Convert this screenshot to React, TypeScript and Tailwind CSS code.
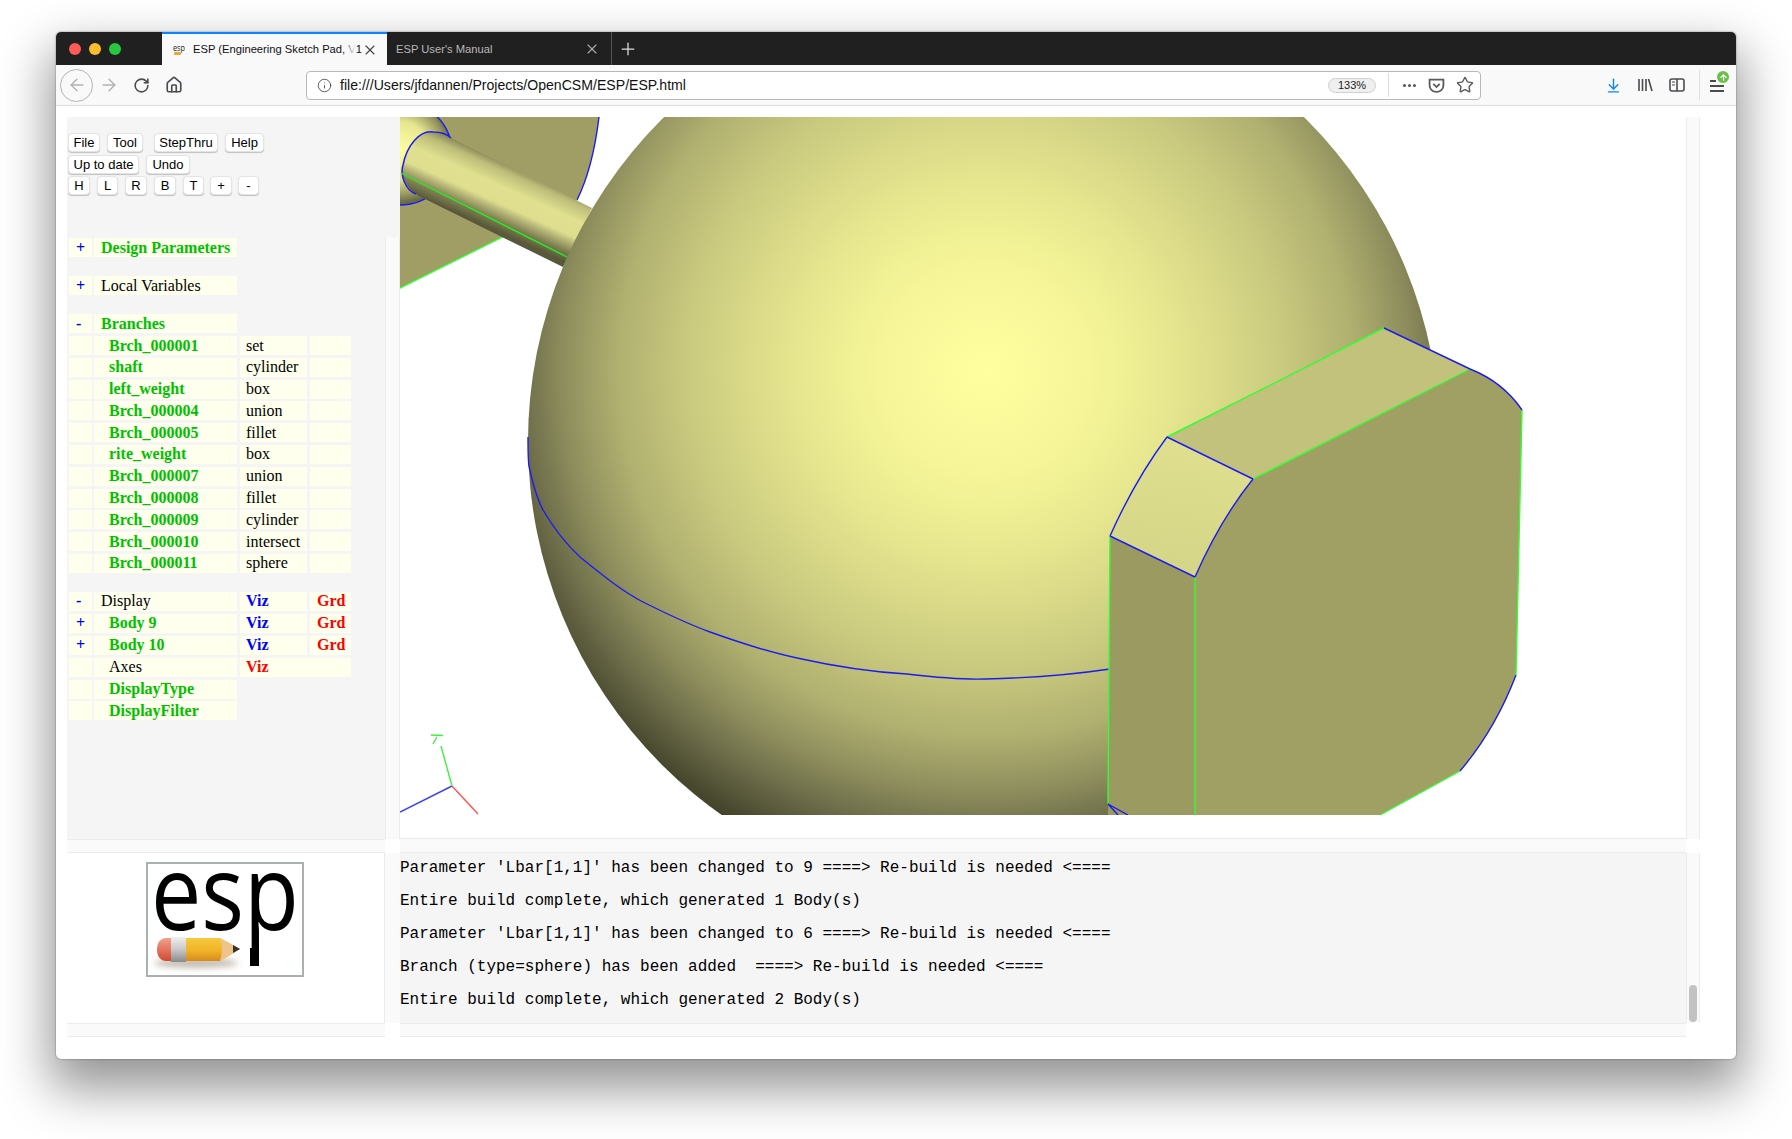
import React from 'react';
import { ArrowLeft, ArrowRight, RotateCw, Home, Info, Ellipsis, Star, ArrowDownToLine, X, Plus, ArrowUp } from 'lucide-react';

const branches: [string, string][] = [
  ['Brch_000001', 'set'],
  ['shaft', 'cylinder'],
  ['left_weight', 'box'],
  ['Brch_000004', 'union'],
  ['Brch_000005', 'fillet'],
  ['rite_weight', 'box'],
  ['Brch_000007', 'union'],
  ['Brch_000008', 'fillet'],
  ['Brch_000009', 'cylinder'],
  ['Brch_000010', 'intersect'],
  ['Brch_000011', 'sphere'],
];

const messages = [
  "Parameter 'Lbar[1,1]' has been changed to 9 ====> Re-build is needed <====",
  'Entire build complete, which generated 1 Body(s)',
  "Parameter 'Lbar[1,1]' has been changed to 6 ====> Re-build is needed <====",
  'Branch (type=sphere) has been added  ====> Re-build is needed <====',
  'Entire build complete, which generated 2 Body(s)',
];

const btn =
  'h-[19px] bg-white rounded-[4px] border border-[#e4e4e4] shadow-[0_1px_1px_rgba(0,0,0,0.22)] flex items-center justify-center text-[13px] leading-none text-black';
const cell = 'h-[19px] bg-[#ffffee] flex items-center whitespace-nowrap';
const green = 'font-bold text-[#00c000]';

const Toggle = ({ sign }: { sign?: string }) => (
  <div className={`${cell} w-[23px] pl-[7px] font-bold text-[#0000ff]`}>{sign}</div>
);

const Scene = () => (
  <svg viewBox="400 117 1286 698" className="block w-[1286px] h-[698px]">
    <defs>
      <radialGradient id="sphere" gradientUnits="userSpaceOnUse" cx="985" cy="370" r="525">
        <stop offset="0" stopColor="#ffffa0" />
        <stop offset="0.2" stopColor="#f6f698" />
        <stop offset="0.36" stopColor="#e6e68f" />
        <stop offset="0.56" stopColor="#cbcb80" />
        <stop offset="0.7" stopColor="#b0b070" />
        <stop offset="0.8" stopColor="#8f8f5e" />
        <stop offset="0.89" stopColor="#6a6a48" />
        <stop offset="0.97" stopColor="#47472e" />
        <stop offset="1" stopColor="#40402a" />
      </radialGradient>
      <radialGradient id="blob" gradientUnits="userSpaceOnUse" cx="400" cy="150" r="52">
        <stop offset="0" stopColor="#ffffa0" />
        <stop offset="0.55" stopColor="#e6e690" />
        <stop offset="0.85" stopColor="#9a9a60" />
        <stop offset="1" stopColor="#6c6c46" />
      </radialGradient>
      <linearGradient id="shaft" gradientUnits="userSpaceOnUse" x1="450" y1="138" x2="423" y2="198">
        <stop offset="0" stopColor="#8e8c5a" />
        <stop offset="0.12" stopColor="#bcbc78" />
        <stop offset="0.35" stopColor="#e0e090" />
        <stop offset="0.6" stopColor="#dede8e" />
        <stop offset="0.7" stopColor="#b5b578" />
        <stop offset="0.85" stopColor="#7d7d50" />
        <stop offset="1" stopColor="#58583a" />
      </linearGradient>
      <linearGradient id="fillet" gradientUnits="userSpaceOnUse" x1="1167" y1="437" x2="1150" y2="560">
        <stop offset="0" stopColor="#dfdf8f" />
        <stop offset="1" stopColor="#d6d688" />
      </linearGradient>
    </defs>

    {/* left weight behind the shaft */}
    <path d="M448 117 L599 117 C595 150 587 180 577 200 L400 288 L400 117 Z" fill="#a09e64" />
    <path d="M599 117 C595 150 587 180 577 200" fill="none" stroke="#1c1cf0" strokeWidth="1.4" />
    <path d="M577 200 L400 288" fill="none" stroke="#33ff33" strokeWidth="1.4" />
    <circle cx="400" cy="153" r="52" fill="url(#blob)" stroke="#1c1cf0" strokeWidth="1.4" />

    {/* shaft */}
    <path
      d="M451 138 L592 208 L563 267 L423 198 C405 190 400 175 403 165 C407 145 420 130 433 132 C440 132 447 134 451 138 Z"
      fill="url(#shaft)"
    />
    <path d="M451 138 C447 134 440 132 433 132 C420 130 407 145 403 165 C400 175 405 190 416 194" fill="none" stroke="#1c1cf0" strokeWidth="1.5" />
    <path d="M401 173 L567 257" stroke="#22ee22" strokeWidth="1.4" />

    {/* sphere */}
    <circle cx="984" cy="442" r="456" fill="url(#sphere)" />
    <path
      d="M528 437 C528 450 528 460 529 466 C532 480 536 497 543 510 C553 527 566 544 580 557 C600 573 620 590 643 602 C665 613 688 624 710 632 C738 642 768 652 797 658 C833 666 870 672 907 674 C933 677 959 680 985 679 C1027 678 1070 675 1110 669"
      fill="none"
      stroke="#1c1cf0"
      strokeWidth="1.4"
    />

    {/* right weight */}
    <path d="M1167 437 L1384 328 L1470 369 L1253 479 Z" fill="#c2c27c" />
    <path d="M1110 536 Q1135 480 1167 437 L1253 479 Q1220 520 1195 577 Z" fill="url(#fillet)" />
    <path d="M1110 536 L1195 577 L1195 815 L1108 815 Z" fill="#9b9a60" />
    <path d="M1195 577 Q1220 520 1253 479 L1470 369 Q1503 382 1522 410 L1516 675 Q1495 730 1460 771 L1380 815 L1195 815 Z" fill="#a1a064" />
    <g fill="none" stroke="#33ff33" strokeWidth="1.4">
      <path d="M1167 437 L1384 328" />
      <path d="M1253 479 L1470 369" />
      <path d="M1110 536 L1108 804" />
      <path d="M1195 577 L1195 815" />
      <path d="M1522 410 L1516 675" />
      <path d="M1460 771 L1380 815" />
    </g>
    <g fill="none" stroke="#1c1cf0" strokeWidth="1.4">
      <path d="M1384 328 L1470 369" />
      <path d="M1167 437 L1253 479" />
      <path d="M1110 536 L1195 577" />
      <path d="M1110 536 Q1135 480 1167 437" />
      <path d="M1195 577 Q1220 520 1253 479" />
      <path d="M1470 369 Q1503 382 1522 410" />
      <path d="M1516 675 Q1495 730 1460 771" />
      <path d="M1108 804 L1128 815 M1108 804 L1118 815" />
    </g>

    {/* axes */}
    <path d="M452 786 L400 812" stroke="#4040f0" strokeWidth="1.4" />
    <path d="M452 786 L478 814" stroke="#ff5050" strokeWidth="1.4" />
    <path d="M452 786 L441 746 M431 735 L443 735.5 M437 737 L433 744" stroke="#40f040" strokeWidth="1.4" fill="none" />
  </svg>
);

const Logo = () => (
  <svg viewBox="0 0 154 111" className="block w-[158px] h-[115px] border-2 border-[#a8b0b0] bg-white">
    <defs>
      <linearGradient id="pbody" x1="0" y1="0" x2="0" y2="1">
        <stop offset="0" stopColor="#f7c93e" />
        <stop offset="0.55" stopColor="#f0b428" />
        <stop offset="1" stopColor="#d68a1c" />
      </linearGradient>
      <linearGradient id="ferrule" x1="0" y1="0" x2="0" y2="1">
        <stop offset="0" stopColor="#f0f0f0" />
        <stop offset="0.5" stopColor="#c8c8c8" />
        <stop offset="1" stopColor="#8a8a8a" />
      </linearGradient>
      <linearGradient id="eraser" x1="0" y1="0" x2="0" y2="1">
        <stop offset="0" stopColor="#f3a08a" />
        <stop offset="1" stopColor="#d24a32" />
      </linearGradient>
      <filter id="soft" x="-20%" y="-100%" width="140%" height="300%">
        <feGaussianBlur stdDeviation="3" />
      </filter>
    </defs>
    <text
      x="3"
      y="66"
      textLength="148"
      lengthAdjust="spacingAndGlyphs"
      fontFamily="'Open Sans', sans-serif"
      fontSize="104"
      fill="#000"
    >
      esp
    </text>
    <rect x="102" y="84" width="9" height="18" fill="#000" />
    <ellipse cx="48" cy="99" rx="42" ry="5" fill="#7a6a50" opacity="0.45" filter="url(#soft)" />
    <path d="M18 74 H24 V97 H18 C13 97 9 93 9 85.5 C9 78 13 74 18 74 Z" fill="url(#eraser)" />
    <rect x="23" y="73" width="15" height="25" fill="url(#ferrule)" />
    <path d="M38 74 H72 L92 85 L72 97 H38 Z" fill="url(#pbody)" />
    <path d="M72 74 L92 85 L72 97 Q76 85 72 74 Z" fill="#efc48a" />
    <path d="M85 81 L92 85 L85 89 Z" fill="#333" />
  </svg>
);

const Favicon = () => (
  <svg viewBox="0 0 14 14" className="w-[14px] h-[14px] shrink-0">
    <text x="1" y="8" textLength="12" lengthAdjust="spacingAndGlyphs" fontFamily="'Open Sans', sans-serif" fontSize="9" fill="#222">
      esp
    </text>
    <rect x="2" y="9" width="7" height="3" rx="1" fill="#e8a92c" />
  </svg>
);

export default function App() {
  return (
    <div className="min-h-[1139px] bg-white pt-[32px] pl-[56px] font-['Liberation_Sans',Arial,sans-serif]">
      <div className="w-[1680px] h-[1027px] bg-white rounded-[5px] overflow-hidden shadow-[0_24px_50px_6px_rgba(0,0,0,0.42),0_0_2px_rgba(0,0,0,0.5)]">
        {/* tab strip */}
        <div className="h-[33px] bg-[#202020] flex">
          <div className="w-[106px] pl-[13px] flex items-center gap-[8px]">
            <span className="w-[12px] h-[12px] rounded-full bg-[#fc5b57]" />
            <span className="w-[12px] h-[12px] rounded-full bg-[#fdbc2e]" />
            <span className="w-[12px] h-[12px] rounded-full bg-[#28c83f]" />
          </div>
          <div className="w-[225px] bg-[#f9f9fa] border-t-2 border-[#0a84ff] flex items-center pl-[10px] pr-[9px] relative">
            <Favicon />
            <span className="ml-[7px] text-[11.2px] text-[#111] whitespace-nowrap">ESP (Engineering Sketch Pad, V1</span>
            <span className="absolute right-[31px] top-0 bottom-0 w-[14px] bg-gradient-to-r from-transparent to-[#f9f9fa]" />
            <X size={16} strokeWidth={1.7} className="ml-auto text-[#444]" />
          </div>
          <div className="w-[225px] flex items-center pl-[9px] pr-[11px] border-r border-[#555]">
            <span className="text-[11.2px] text-[#b8b8b8] whitespace-nowrap mt-[1px]">ESP User's Manual</span>
            <X size={16} strokeWidth={1.7} className="ml-auto text-[#aaa]" />
          </div>
          <div className="w-[32px] flex items-center justify-center">
            <Plus size={20} strokeWidth={1.5} className="text-[#ddd]" />
          </div>
        </div>

        {/* nav toolbar */}
        <div className="h-[41px] bg-[#f9f9fa] border-b border-[#dedede] flex items-center">
          <div className="ml-[4px] w-[33px] h-[33px] rounded-full border border-[#b4b4b4] flex items-center justify-center">
            <ArrowLeft size={20} strokeWidth={1.6} className="text-[#b1b1b3]" />
          </div>
          <ArrowRight size={20} strokeWidth={1.6} className="ml-[6px] text-[#b1b1b3]" />
          <RotateCw size={17} strokeWidth={2.2} className="ml-[14px] text-[#4a4a4f]" />
          <Home size={18} strokeWidth={2.2} className="ml-[15px] text-[#4a4a4f]" />
          <div className="ml-[123px] w-[1175px] h-[29px] bg-white rounded-[4px] border border-[#b8b8b8] flex items-center">
            <Info size={15} strokeWidth={1.5} className="ml-[10px] text-[#555]" />
            <span className="ml-[8px] mt-[2px] text-[14.1px] text-[#111]">file:///Users/jfdannen/Projects/OpenCSM/ESP/ESP.html</span>
            <span className="ml-auto h-[15px] w-[48px] rounded-full bg-[#efefef] border border-[#d0d0d0] text-[11px] text-[#222] flex items-center justify-center">133%</span>
            <span className="ml-[12px] w-px h-[24px] bg-[#dcdcdc]" />
            <Ellipsis size={17} strokeWidth={2.4} className="ml-[12px] text-[#5a5a5e]" />
            <svg viewBox="0 0 16 16" className="ml-[10px] w-[17px] h-[17px] text-[#5a5a5e]" fill="none" stroke="currentColor" strokeWidth="1.7">
              <path d="M1.5 2.5 H14.5 V8 C14.5 11.5 11.5 14 8 14 C4.5 14 1.5 11.5 1.5 8 Z" />
              <path d="M5 6.5 L8 9.5 L11 6.5" />
            </svg>
            <Star size={18} strokeWidth={1.9} className="ml-[11px] mr-[6px] text-[#5a5a5e]" />
          </div>
          <ArrowDownToLine size={17} strokeWidth={2} className="ml-[124px] text-[#0a84ff]" />
          <svg viewBox="0 0 16 16" className="ml-[15px] w-[16px] h-[16px] text-[#4a4a4f]" fill="none" stroke="currentColor" strokeWidth="1.6">
            <path d="M2 2 V14 M5.5 2 V14 M9 2 V14 M11.5 2 L15 14" />
          </svg>
          <svg viewBox="0 0 16 16" className="ml-[16px] w-[16px] h-[16px] text-[#4a4a4f]" fill="none" stroke="currentColor" strokeWidth="1.6">
            <rect x="1" y="2" width="14" height="12" rx="2" />
            <path d="M8 2 V14" />
            <path d="M3 5 H6 M3 8 H6" strokeWidth="1.2" />
          </svg>
          <span className="ml-[14px] w-px h-[30px] bg-[#e0e0e0]" />
          <div className="ml-[10px] relative w-[14px] h-[14px] flex flex-col justify-between py-[1px] mt-[2px]">
            <span className="h-[2px] bg-[#4a4a4f] w-[6px]" />
            <span className="h-[2px] bg-[#4a4a4f]" />
            <span className="h-[2px] bg-[#4a4a4f]" />
            <span className="absolute -top-[8px] left-[7px] w-[12px] h-[12px] rounded-full bg-[#6cc04a] flex items-center justify-center">
              <ArrowUp size={9} strokeWidth={3} className="text-white" />
            </span>
          </div>
        </div>

        {/* page */}
        <div className="pt-[11px] pl-[11px] grid grid-cols-[318px_15px_1286px_14px] grid-rows-[722px_14px_170px_14px]">
          <div className="bg-[#f5f5f5] pt-[16px] pl-[2px] overflow-hidden">
            <div className="flex flex-col gap-[3px] -ml-[1px]">
              <div className="flex">
                <button className={`${btn} w-[32px]`}>File</button>
                <button className={`${btn} w-[36px] ml-[7px]`}>Tool</button>
                <button className={`${btn} w-[64px] ml-[11px]`}>StepThru</button>
                <button className={`${btn} w-[39px] ml-[7px]`}>Help</button>
              </div>
              <div className="flex">
                <button className={`${btn} w-[71px]`}>Up to date</button>
                <button className={`${btn} w-[44px] ml-[7px]`}>Undo</button>
              </div>
              <div className="flex -mt-[1px]">
                <button className={`${btn} w-[22px]`}>H</button>
                <button className={`${btn} w-[21px] ml-[7px]`}>L</button>
                <button className={`${btn} w-[22px] ml-[7px]`}>R</button>
                <button className={`${btn} w-[22px] ml-[7px]`}>B</button>
                <button className={`${btn} w-[21px] ml-[7px]`}>T</button>
                <button className={`${btn} w-[22px] ml-[6px]`}>+</button>
                <button className={`${btn} w-[21px] ml-[6px]`}>-</button>
              </div>
            </div>

            <div className="mt-[43px] font-['Liberation_Serif','Times_New_Roman',serif] text-[16px] text-black">
              <div className="flex gap-[2px]">
                <Toggle sign="+" />
                <div className={`${cell} w-[143px] pl-[7px] ${green}`}>Design Parameters</div>
              </div>
              <div className="flex gap-[2px] mt-[19px]">
                <Toggle sign="+" />
                <div className={`${cell} w-[143px] pl-[7px]`}>Local Variables</div>
              </div>
              <div className="flex gap-[2px] mt-[19px]">
                <Toggle sign="-" />
                <div className={`${cell} w-[143px] pl-[7px] ${green}`}>Branches</div>
              </div>
              <div className="flex flex-col gap-[2.8px] mt-[3px]">
                {branches.map(([name, kind]) => (
                  <div key={name} className="flex">
                    <Toggle />
                    <div className={`${cell} w-[143px] ml-[2px] pl-[15px] ${green}`}>{name}</div>
                    <div className={`${cell} w-[67px] ml-[3px] pl-[6px]`}>{kind}</div>
                    <div className={`${cell} w-[41px] ml-[3px]`} />
                  </div>
                ))}
              </div>
              <div className="flex flex-col gap-[2.9px] mt-[19px]">
                <div className="flex">
                  <Toggle sign="-" />
                  <div className={`${cell} w-[143px] ml-[2px] pl-[7px]`}>Display</div>
                  <div className={`${cell} w-[67px] ml-[3px] pl-[6px] font-bold text-[#0000ff]`}>Viz</div>
                  <div className={`${cell} w-[41px] ml-[3px] pl-[7px] font-bold text-[#ff0000]`}>Grd</div>
                </div>
                <div className="flex">
                  <Toggle sign="+" />
                  <div className={`${cell} w-[143px] ml-[2px] pl-[15px] ${green}`}>Body 9</div>
                  <div className={`${cell} w-[67px] ml-[3px] pl-[6px] font-bold text-[#0000ff]`}>Viz</div>
                  <div className={`${cell} w-[41px] ml-[3px] pl-[7px] font-bold text-[#ff0000]`}>Grd</div>
                </div>
                <div className="flex">
                  <Toggle sign="+" />
                  <div className={`${cell} w-[143px] ml-[2px] pl-[15px] ${green}`}>Body 10</div>
                  <div className={`${cell} w-[67px] ml-[3px] pl-[6px] font-bold text-[#0000ff]`}>Viz</div>
                  <div className={`${cell} w-[41px] ml-[3px] pl-[7px] font-bold text-[#ff0000]`}>Grd</div>
                </div>
                <div className="flex">
                  <Toggle />
                  <div className={`${cell} w-[143px] ml-[2px] pl-[15px]`}>Axes</div>
                  <div className={`${cell} w-[111px] ml-[3px] pl-[6px] font-bold text-[#ff0000]`}>Viz</div>
                </div>
                <div className="flex">
                  <Toggle />
                  <div className={`${cell} w-[143px] ml-[2px] pl-[15px] ${green}`}>DisplayType</div>
                </div>
                <div className="flex">
                  <Toggle />
                  <div className={`${cell} w-[143px] ml-[2px] pl-[15px] ${green}`}>DisplayFilter</div>
                </div>
              </div>
            </div>
          </div>

          <div className="flex flex-col">
            <div className="h-[120px] bg-[#f5f5f5]" />
            <div className="flex-1 bg-[#fafafa] border-x border-[#ececec]" />
          </div>

          <div className="border-b border-[#e8e8e8]">
            <Scene />
          </div>
          <div className="bg-[#fafafa] border-x border-[#ececec]" />

          <div className="bg-[#fafafa] border-y border-[#ececec]" />
          <div />
          <div className="bg-[#fafafa] border-b border-[#ececec]" />
          <div />

          <div className="bg-white border-r border-[#ececec] pt-[9px] pl-[79px]">
            <Logo />
          </div>
          <div className="bg-[#fafafa]" />
          <div className="bg-[#f5f5f5] font-['Liberation_Mono','Courier_New',monospace] text-[16px] leading-[33px] text-black whitespace-pre">
            <div className="-mt-[1px]">
              {messages.map((m, i) => (
                <div key={i}>{m}</div>
              ))}
            </div>
          </div>
          <div className="bg-[#fafafa] border-x border-[#ececec] flex flex-col justify-end items-center pb-[1px]">
            <div className="w-[8px] h-[37px] rounded-full bg-[#c2c2c2]" />
          </div>

          <div className="bg-[#fafafa] border-y border-[#ececec]" />
          <div className="bg-white" />
          <div className="bg-[#fafafa] border-y border-[#ececec]" />
          <div />
        </div>
      </div>
    </div>
  );
}
